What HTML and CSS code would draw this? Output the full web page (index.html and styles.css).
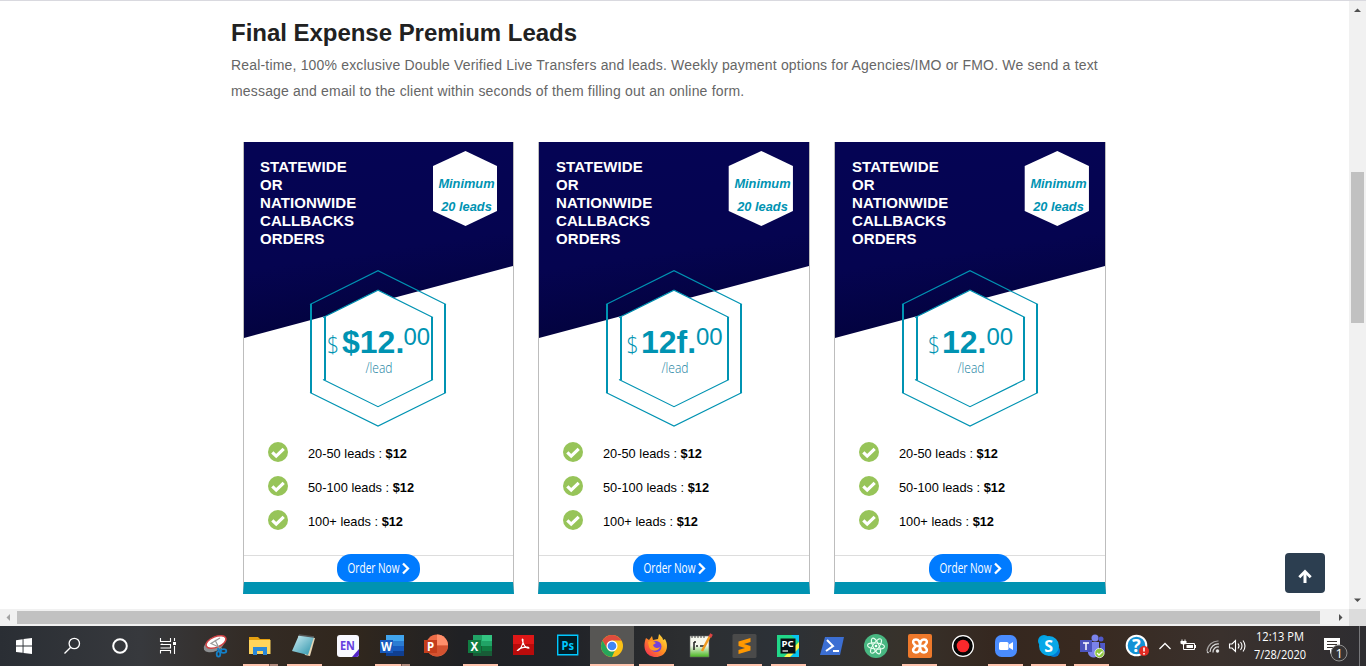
FILE: index.html
```html
<!DOCTYPE html>
<html lang="en">
<head>
<meta charset="utf-8">
<title>Final Expense Premium Leads</title>
<link rel="stylesheet" href="styles.css">
</head>
<body>
<svg class="defs" width="0" height="0">
  <defs>
    <linearGradient id="navy" x1="0.4" y1="0" x2="0.6" y2="1">
      <stop offset="0" stop-color="#050454"/><stop offset=".55" stop-color="#050450"/><stop offset="1" stop-color="#02023a"/>
    </linearGradient>
    <linearGradient id="fox" x1="1" y1="0" x2="0" y2="1"><stop offset="0" stop-color="#fff044"/><stop offset=".45" stop-color="#ff9420"/><stop offset="1" stop-color="#f5205a"/></linearGradient>
    <linearGradient id="note" x1="0" y1="0" x2="1" y2="1"><stop offset="0" stop-color="#d2f0f5"/><stop offset="1" stop-color="#2690a8"/></linearGradient>
    <linearGradient id="npp" x1="0" y1="0" x2="0" y2="1"><stop offset=".45" stop-color="#f6f8ee"/><stop offset="1" stop-color="#48b520"/></linearGradient>
    <symbol id="ok" viewBox="0 0 20 20"><circle cx="10" cy="10" r="10" fill="#97c459"/><path d="M4.300 10.400l3.900 3.700 7.500-7.300" fill="none" stroke="#fff" stroke-width="3.200"/></symbol>
    <symbol id="banner" viewBox="0 0 269 196" preserveAspectRatio="none"><path d="M0 0H269V124L0 196Z" fill="url(#navy)"/><path d="M189 24L221.500 9L253 24V69L221.500 84L189 69Z" fill="#fff"/></symbol>
    <symbol id="hexes" viewBox="0 0 138 158">
      <path d="M69 20L123.500 47.500V110.500L69 137.500L14.500 110.500V47.500Z" fill="#fff"/>
      <g fill="none" stroke="#0093b2"><path stroke-width="1.200" d="M1 34.500L69 .7L137 34.500M1 122.500L69 156L137 122.500M14 47.500L69 20.200L124 47.500M14 109.500L69 136.700L124 109.500"/><path stroke-width="2" d="M2 34V123M136 34V123M16 47V110M123 47V110"/></g>
    </symbol>
  </defs>
</svg>
<div class="window">
  <main class="page">
    <h1 class="title">Final Expense Premium Leads</h1>
    <p class="intro">Real-time, 100% exclusive Double Verified Live Transfers and leads. Weekly payment options for Agencies/IMO or FMO. We send a text<br>message and email to the client within seconds of them filling out an online form.</p>
    <div class="cards">
      <article class="card first">
        <header class="head">
          <svg class="banner"><use href="#banner"/></svg>
          <h2 class="name">STATEWIDE<br>OR<br>NATIONWIDE<br>CALLBACKS<br>ORDERS</h2>
          <p class="minimum">Minimum<br>20 leads</p>
        </header>
        <svg class="price" viewBox="0 0 138 158"><use href="#hexes"/>
          <text class="sign" x="18" y="83" textLength="12" lengthAdjust="spacingAndGlyphs">$</text><text class="amount" x="33" y="83">$12.</text><text class="cents" x="94.500" y="75">00</text>
          <text class="per" x="56.500" y="103" textLength="27" lengthAdjust="spacingAndGlyphs">/lead</text></svg>
        <ul class="tiers">
          <li><svg class="ok"><use href="#ok"/></svg><span>20-50 leads : <b>$12</b></span></li>
          <li><svg class="ok"><use href="#ok"/></svg><span>50-100 leads : <b>$12</b></span></li>
          <li><svg class="ok"><use href="#ok"/></svg><span>100+ leads : <b>$12</b></span></li>
        </ul>
        <footer class="foot"><a class="order"><svg width="83" height="28"><text x="10.500" y="19" textLength="52" lengthAdjust="spacingAndGlyphs">Order Now</text><path d="M66 9.500l5 5-5 5"/></svg></a></footer>
      </article>
      <article class="card">
        <header class="head">
          <svg class="banner"><use href="#banner"/></svg>
          <h2 class="name">STATEWIDE<br>OR<br>NATIONWIDE<br>CALLBACKS<br>ORDERS</h2>
          <p class="minimum">Minimum<br>20 leads</p>
        </header>
        <svg class="price" viewBox="0 0 138 158"><use href="#hexes"/>
          <text class="sign" x="21.500" y="83" textLength="12" lengthAdjust="spacingAndGlyphs">$</text><text class="amount" x="36" y="83">12f.</text><text class="cents" x="91" y="75">00</text>
          <text class="per" x="56.500" y="103" textLength="27" lengthAdjust="spacingAndGlyphs">/lead</text></svg>
        <ul class="tiers">
          <li><svg class="ok"><use href="#ok"/></svg><span>20-50 leads : <b>$12</b></span></li>
          <li><svg class="ok"><use href="#ok"/></svg><span>50-100 leads : <b>$12</b></span></li>
          <li><svg class="ok"><use href="#ok"/></svg><span>100+ leads : <b>$12</b></span></li>
        </ul>
        <footer class="foot"><a class="order"><svg width="83" height="28"><text x="10.500" y="19" textLength="52" lengthAdjust="spacingAndGlyphs">Order Now</text><path d="M66 9.500l5 5-5 5"/></svg></a></footer>
      </article>
      <article class="card">
        <header class="head">
          <svg class="banner"><use href="#banner"/></svg>
          <h2 class="name">STATEWIDE<br>OR<br>NATIONWIDE<br>CALLBACKS<br>ORDERS</h2>
          <p class="minimum">Minimum<br>20 leads</p>
        </header>
        <svg class="price" viewBox="0 0 138 158"><use href="#hexes"/>
          <text class="sign" x="27" y="83" textLength="12" lengthAdjust="spacingAndGlyphs">$</text><text class="amount" x="41" y="83">12.</text><text class="cents" x="85.500" y="75">00</text>
          <text class="per" x="56.500" y="103" textLength="27" lengthAdjust="spacingAndGlyphs">/lead</text></svg>
        <ul class="tiers">
          <li><svg class="ok"><use href="#ok"/></svg><span>20-50 leads : <b>$12</b></span></li>
          <li><svg class="ok"><use href="#ok"/></svg><span>50-100 leads : <b>$12</b></span></li>
          <li><svg class="ok"><use href="#ok"/></svg><span>100+ leads : <b>$12</b></span></li>
        </ul>
        <footer class="foot"><a class="order"><svg width="83" height="28"><text x="10.500" y="19" textLength="52" lengthAdjust="spacingAndGlyphs">Order Now</text><path d="M66 9.500l5 5-5 5"/></svg></a></footer>
      </article>
    </div>
    <a class="to-top"><svg width="40" height="40" fill="none" stroke="#fff"><path stroke-width="3" d="M20 31V20"/><path stroke-width="2.800" d="M14.300 25.200L20 19.500l5.700 5.700"/></svg></a>
  </main>
  <div class="vbar"><svg width="17" height="17"><path d="M5 11L8.500 7.500 12 11Z" fill="#505050"/></svg><i class="vthumb"></i><svg class="down" width="17" height="17"><path d="M5 6.500h7L8.500 10Z" fill="#505050"/></svg></div>
</div>
<div class="hbar"><svg width="17" height="17"><path d="M10 5v7L6.500 8.500Z" fill="#a3a3a3"/></svg><i class="hthumb"></i><svg class="right" width="17" height="17"><path d="M7 5v7l3.500-3.500Z" fill="#505050"/></svg><i class="corner"></i></div>
<div class="taskbar">
  <div class="cell sys"><svg viewBox="0 0 24 24"><path fill="#fff" d="M4 6.200l6.600-1v6.300H4ZM11.500 5L20 4v7.500h-8.500ZM4 12.400h6.600v6.400L4 17.900ZM11.500 12.400H20V20l-8.500-1.100Z"/></svg></div>
  <div class="cell sys"><svg viewBox="0 0 24 24" fill="none" stroke="#fff" stroke-width="1.300"><circle cx="14.300" cy="9.500" r="5.200"/><path d="M10.700 13.300L4.500 19.500"/></svg></div>
  <div class="cell sys"><svg viewBox="0 0 24 24" fill="none" stroke="#fff" stroke-width="2"><circle cx="12" cy="12" r="6.800"/></svg></div>
  <div class="cell sys"><svg viewBox="0 0 24 24" fill="none" stroke="#fff" stroke-width="1.100"><path d="M4.500 4v3.500h10V4M4.500 19.500v-3H14.500v3M6 10.500v-1M4.500 10.500h10v3.500h-10M18.500 4v3M18.500 12v8"/><path fill="#fff" stroke="none" d="M17 8h3v3h-3Z"/></svg></div>
  <div class="cell snip"><svg viewBox="0 0 24 24"><ellipse cx="11" cy="11" rx="11" ry="6.300" transform="rotate(-25 11 11)" fill="#8d9092"/><ellipse cx="13" cy="8" rx="10.500" ry="5.300" transform="rotate(-22 13 8)" fill="#fff" stroke="#cf4345" stroke-width="1.500"/><path d="M17 4L8 9.500l11 5M12 6l4 8" fill="none" stroke="#999" stroke-width="1.200"/><g fill="none" stroke="#1480c8" stroke-width="1.800"><ellipse cx="15.500" cy="20" rx="1.800" ry="2.700"/><ellipse cx="20.500" cy="17" rx="2.800" ry="1.800"/><path d="M16 17l-1-3M18 16l-4-1"/></g></svg></div>
  <div class="cell open multi"><svg viewBox="0 0 24 24"><path fill="#e5a010" d="M1 3h9l2 2h10v5H1Z"/><path fill="#ffd45c" d="M1 6h21.500v14H1Z"/><path fill="#2b88d8" d="M5 13h14v8h-4v-4H9v4H5Z"/></svg></div>
  <div class="cell open"><svg viewBox="0 0 24 24"><path d="M6 2l17 2-5 18-5-1Z" fill="#e7d7b5"/><path d="M7 1l15 2-6 18L0 17Z" fill="url(#note)"/><path d="M7 1l15 2" stroke="#555" stroke-width="1.500"/></svg></div>
  <div class="cell"><svg viewBox="0 0 24 24"><rect x="1" y="1" width="22" height="22" rx="3" fill="#f9f9ff"/><path d="M23 15v5q0 3-3 3h-4Z" fill="#5324c7"/><text class="app-text" x="4" y="16" fill="#6540df" font-size="11.500" textLength="15" lengthAdjust="spacingAndGlyphs">EN</text></svg></div>
  <div class="cell open multi"><svg viewBox="0 0 24 24"><path fill="#41a5ee" d="M6 1h18v6H6Z"/><path fill="#2b7cd3" d="M6 7h18v5H6Z"/><path fill="#185abd" d="M6 12h18v5H6Z"/><path fill="#103f91" d="M6 17h18v5H6Z"/><path fill="#185abd" d="M0 6h13v13H0Z"/><text class="app-text" x="1" y="16.500" fill="#fff" font-size="11.500" textLength="11" lengthAdjust="spacingAndGlyphs">W</text></svg></div>
  <div class="cell"><svg viewBox="0 0 24 24"><circle cx="13" cy="11.500" r="11" fill="#ed6c47"/><path d="M13 .5a11 11 0 0 1 11 11H13Z" fill="#ff8f6b"/><path d="M24 11.500a11 11 0 0 1-20 6l9-6Z" fill="#d35230"/><path fill="#c43e1c" d="M0 6h13v13H0Z"/><text class="app-text" x="3" y="16.500" fill="#fff" font-size="11.500">P</text></svg></div>
  <div class="cell open"><svg viewBox="0 0 24 24"><path fill="#21a366" d="M5 1h19v21H5Z"/><path fill="#33c481" d="M14 1h10v6H14Z"/><path fill="#107c41" d="M14 12h10v5H14Z"/><path fill="#185c37" d="M5 12h9v5h10v5H5Z"/><path fill="#107c41" d="M0 6h13v13H0Z"/><text class="app-text" x="2.500" y="16.500" fill="#fff" font-size="11.500">X</text></svg></div>
  <div class="cell"><svg viewBox="0 0 24 24"><path fill="#b90b0b" d="M1 1h21v20H1Z"/><path fill="#df1717" d="M1 1h21v9H1Z"/><path d="M5.500 16.500c2 0 6.500-6.500 5.500-11-.8-1-1.300 0 0 3 1.500 4 4 6 6 5.500 0-2-9.500-.5-11.500 2.500Z" fill="none" stroke="#fff" stroke-width="1.100"/></svg></div>
  <div class="cell"><svg viewBox="0 0 24 24"><path fill="#001d26" stroke="#00c8ff" stroke-width="1.400" d="M1.700 1.200h20v19.600h-20Z"/><text x="5.500" y="15.500" class="app-text" fill="#00c8ff" font-size="12" textLength="12.500" lengthAdjust="spacingAndGlyphs">Ps</text></svg></div>
  <div class="cell open active"><svg viewBox="0 0 24 24"><circle cx="12" cy="12" r="11" fill="#fbc116"/><path fill="#df4c3e" d="M2.500 6.500A11 11 0 0 1 21.500 6.500H12l-4.800 8.300Z"/><path fill="#26a65b" d="M2.500 6.500l4.700 8.300a5.500 5.500 0 0 0 7.500 2L12 23A11 11 0 0 1 2.500 6.500Z"/><circle cx="12" cy="12" r="5.500" fill="#fff"/><circle cx="12" cy="12" r="4.300" fill="#4285f4"/></svg></div>
  <div class="cell open"><svg viewBox="0 0 24 24"><path fill="url(#fox)" d="M2 4l3 2 3-4 1 4 5-1 1-5c3 3 4 4 4 6l2-1c5 9 0 18-9 18C2 23-2 14 2 4Z"/><circle cx="12" cy="12.500" r="5.500" fill="#7542d9"/><path fill="#ff9d25" d="M4 8c3-2 5-1 8 1l-3 2c1 3 4 4 7 2-2 5-9 5-11 0Z"/></svg></div>
  <div class="cell"><svg viewBox="0 0 24 24"><path fill="url(#npp)" stroke="#666" stroke-width=".6" d="M2 2h19v21H2Z"/><path d="M4 2v2m3-2v2m3-2v2m3-2v2m3-2v2" stroke="#444"/><path d="M6 8v8M8 12h2m2 0h4M6 8h2" stroke="#222" stroke-width="1.500" fill="none"/><path d="M22 2l-8 15" stroke="#f09a20" stroke-width="2.500"/><path d="M23.500 0L22 3" stroke="#d44" stroke-width="3"/></svg></div>
  <div class="cell open"><svg viewBox="0 0 24 24"><rect x=".5" width="24" height="24" rx="1.500" fill="#4a4a4a"/><path fill="#ff9800" d="M6.500 7.500L18.500 4v4l-6.500 2 6.500 2v4.500l-12 3.500v-4l6.500-2-6.500-2Z"/></svg></div>
  <div class="cell open"><svg viewBox="0 0 24 24"><path fill="#21d789" d="M1 1h22v22H1Z"/><path fill="#fcf84a" d="M23 8v15H8Z"/><path fill="#07c3f2" d="M15 1h8v7ZM14 23l9-9v9Z"/><path fill="#071013" d="M4.500 4.500h15v15h-15Z"/><text class="app-text" x="5.500" y="12.500" fill="#fff" font-size="9" textLength="12" lengthAdjust="spacingAndGlyphs">PC</text><path d="M6.500 17h5.500" stroke="#fff" stroke-width="1.200"/></svg></div>
  <div class="cell"><svg viewBox="0 0 24 24"><path fill="#3c6fd3" d="M5 3h19l-4 18H0Z"/><path d="M7 6l6 6-7 5M13 17h6" fill="none" stroke="#fff" stroke-width="2"/></svg></div>
  <div class="cell"><svg viewBox="0 0 24 24"><circle cx="12" cy="12" r="12" fill="#48b781"/><g fill="none" stroke="#e8fff0"><ellipse cx="12" cy="12" rx="3" ry="8.500" transform="rotate(-25 12 12)"/><ellipse cx="12" cy="12" rx="3" ry="8.500" transform="rotate(35 12 12)"/><ellipse cx="12" cy="12" rx="3" ry="8.500" transform="rotate(95 12 12)"/></g><circle cx="12" cy="12" r="1.300" fill="#fff"/></svg></div>
  <div class="cell open narrow"><svg viewBox="0 0 24 24"><rect width="24" height="24" rx="2" fill="#ee792b"/><path d="M6.500 10.500C4 8 5 5.500 8 5.500c4 0 4 4 4 6.500 0-2.500 0-6.500 4-6.500 3 0 4 2.500 1.500 5L16 12l1.500 1.500c2.500 2.500 1.500 5-1.500 5-4 0-4-4-4-6.500 0 2.500 0 6.500-4 6.500-3 0-4-2.500-1.500-5L8 12ZM8 12h8" fill="none" stroke="#fff" stroke-width="2.500"/></svg></div>
  <div class="cell narrow"><svg viewBox="0 0 24 24"><circle cx="12" cy="12" r="10.400" fill="#050505" stroke="#fff" stroke-width="1.300"/><circle cx="12" cy="12" r="6.300" fill="#f9292c"/></svg></div>
  <div class="cell open narrow"><svg viewBox="0 0 24 24"><rect x="1" y="1" width="22" height="22" rx="6.500" fill="#4a8cff"/><rect x="5" y="8" width="9.500" height="8" rx="1.500" fill="#fff"/><path d="M15 10.500l4-2.500v8l-4-2.500Z" fill="#fff"/></svg></div>
  <div class="cell open narrow"><svg viewBox="0 0 24 24"><circle cx="7" cy="7" r="6" fill="#00a4e6"/><circle cx="17" cy="17" r="6" fill="#0078d4"/><circle cx="12" cy="12" r="10" fill="#08a8e8"/><text class="app-text" x="7.200" y="17.500" fill="#fff" font-size="16">S</text></svg></div>
  <div class="cell open narrow"><svg viewBox="0 0 24 24"><circle cx="15" cy="4" r="3.500" fill="#7b83eb"/><circle cx="21" cy="5" r="2.500" fill="#5059c9"/><path d="M8 8h11v9a5 5 0 0 1-11 2Z" fill="#7b83eb"/><path d="M20 9h5v7q0 3-4 4Z" fill="#5059c9"/><path d="M0 6h12v12H0Z" fill="#4b53bc"/><path d="M3 9h6M6 9v7" stroke="#fff" stroke-width="1.500"/><circle cx="19.500" cy="19" r="4.700" fill="#8ec63f" stroke="#fff" stroke-width=".7"/><path d="M17 19l2 2 3.500-3.500" fill="none" stroke="#fff" stroke-width="1.300"/></svg></div>
  <div class="cell help"><svg viewBox="0 0 24 24"><circle cx="11.500" cy="11.500" r="9.800" fill="#1292d5" stroke="#fff" stroke-width="2"/><text class="app-text" x="7" y="18" fill="#fff" font-size="18">?</text><circle cx="19" cy="17" r="5" fill="#e22b22"/><path d="M19 13.500v4M19 19v1.500" stroke="#fff" stroke-width="1.600"/></svg></div>
  <div class="cell chev"><svg viewBox="0 0 24 24"><path d="M6.500 15L12 9.500l5.500 5.500" fill="none" stroke="#fff" stroke-width="1.300"/></svg></div>
  <div class="cell tray"><svg viewBox="0 0 24 24" fill="none" stroke="#fff"><path d="M10 9.500h8.500v6H8.500M19.500 11v3M6 5.500v2M9 5.500v2M7.500 10v5.500h2"/><path fill="#fff" stroke="none" d="M4.500 7h6v2.500q-3 2-6 0ZM10.500 11H17v3h-6.500Z"/></svg></div>
  <div class="cell tray"><svg viewBox="0 0 24 24" fill="none" stroke="#ddd" stroke-width="1.200"><path opacity=".65" d="M6 17A11 11 0 0 1 17.500 7"/><path d="M9 18a8 8 0 0 1 9-8M12 18.500a5 5 0 0 1 6-5.500"/><path d="M6 17.500l1.500 1.500"/><circle cx="16.500" cy="17" r="1.200" fill="#fff"/></svg></div>
  <div class="cell vol"><svg viewBox="0 0 24 24" fill="none" stroke="#fff" stroke-width="1.100"><path d="M4.500 10h2.500l3.500-3.500v11L7 14H4.500ZM13 9.500q2 2.500 0 5M15.500 8q3 4 0 8M18 6.500q4 5.500 0 11"/></svg></div>
  <div class="clock"><svg width="58" height="40"><text x="3" y="15" textLength="48" lengthAdjust="spacingAndGlyphs">12:13 PM</text><text x="1" y="33" textLength="52" lengthAdjust="spacingAndGlyphs">7/28/2020</text></svg></div>
  <div class="notice"><svg width="32" height="40"><path fill="#fff" d="M3 12h16v12h-6l-4 4v-4H3Z"/><path d="M6 15.500h10M6 18.500h10M6 21.500h6" stroke="#3a3431"/><circle cx="18" cy="27" r="8" fill="#363334" stroke="#909090"/><text x="14.500" y="31.500">1</text></svg></div>
</div>
</body>
</html>
```

FILE: styles.css
```css
* { box-sizing: border-box; }
body {
  margin: 0; width: 1366px; height: 666px; overflow: hidden;
  display: flex; flex-direction: column;
  background: #fff; font-family: "Liberation Sans", Arial, sans-serif;
}
svg { display: block; flex: none; }
.defs { position: absolute; }
.window { display: flex; height: 609px; border-top: 1px solid #d9d9df; }
.page { position: relative; width: 1349px; padding: 17px 0 0 231px; }
.title { margin: 0; font-size: 24px; line-height: 30px; letter-spacing: -.03px; color: #212121; }
.intro { margin: 4px 0 0; font-size: 14px; line-height: 26px; letter-spacing: .178px; color: #666; white-space: nowrap; }
.cards {
  display: grid; grid-template-columns: 271px 272px 272px; gap: 24px;
  margin: 38px 0 0 12px;
}
.card {
  height: 452px; display: flex; flex-direction: column; align-items: center;
  border: 1px solid #bdbdbd; border-top: 0; border-bottom: 12px solid #0093b2;
}
.head { position: relative; width: 100%; height: 128px; display: flex; justify-content: space-between; padding: 16px 14.500px 0 17px; }
.first .head { padding-left: 16px; }
.banner { position: absolute; left: 0; top: 0; width: 100%; height: 196px; }
.name { position: relative; margin: 0; font-size: 15px; line-height: 18px; letter-spacing: .08px; color: #fff; }
.minimum {
  position: relative; margin: 14px 0 0; width: 64px; text-align: center;
  font-size: 12.800px; line-height: 23px; font-weight: bold; font-style: italic; color: #0093b2;
}
.price { position: relative; width: 138px; height: 158px; }
.first .price { margin-left: -1px; }
.price text { fill: #0093b2; font-family: "Open Sans", sans-serif; font-weight: 300; }
.price .sign { font-size: 24px; }
.price .amount { font-family: "Liberation Sans", Arial, sans-serif; font-size: 32px; font-weight: bold; }
.price .cents { font-family: "Liberation Sans", Arial, sans-serif; font-size: 24px; }
.price .per { font-size: 14px; fill: #177f9f; }
.tiers { width: 100%; margin: 7px 0 0; padding: 0 0 0 24px; list-style: none; font-size: 12.800px; color: #000; }
.tiers li { height: 34px; display: flex; align-items: center; gap: 20px; }
.tiers span { padding-top: 3px; }
.ok { width: 20px; height: 20px; }
.foot { width: 100%; height: 27px; margin-top: auto; border-top: 1px solid #ddd; display: flex; justify-content: center; }
.order { width: 83px; height: 28px; margin-top: -2px; background: #007bff; border-radius: 14px 14px 12px 12px; }
.order text { font: 14px "Open Sans", sans-serif; fill: #fff; }
.order path { fill: none; stroke: #fff; stroke-width: 2.300px; }
.to-top { position: absolute; left: 1285px; top: 552px; width: 40px; height: 40px; border-radius: 4px; background: #2c3e50; }
.to-top svg { margin-top: -1px; }
.vbar { width: 17px; display: flex; flex-direction: column; align-items: center; background: #f1f1f1; }
.vthumb { width: 13px; height: 151px; margin-top: 154px; background: #c1c1c1; }
.down { margin-top: auto; }
.hbar { height: 17px; display: flex; align-items: center; background: #f1f1f1; }
.hthumb { width: 1303px; height: 13px; background: #c1c1c1; }
.right { margin-left: auto; }
.corner { width: 17px; height: 17px; background: #dcdcdc; }
.taskbar {
  height: 40px; display: flex;
  background: linear-gradient(90deg, #2a2e34 0, #37393d 140px, #332b25 250px, #31271d 350px, #202124 460px, #202227 560px, #2c2e30 680px, #2c3137 780px, #37322b 900px, #35271f 1000px, #38291f 1080px, #3a312d 1220px, #2e2d31 1366px);
}
.cell { width: 44px; height: 40px; display: flex; align-items: center; justify-content: center; }
.cell svg { width: 24px; height: 24px; overflow: visible; }
.sys { width: 48px; }
.snip { width: 46px; }
.narrow { width: 43px; }
.open { background: linear-gradient(#ffc4ad, #ffc4ad) center bottom / 35px 2px no-repeat; }
.multi { background: linear-gradient(90deg, #ffc4ad 26px, #7a584d 26px 27px, #b38c7e 27px) center bottom / 35px 2px no-repeat; }
.active { background: linear-gradient(#ffc4ad, #ffc4ad) center bottom / 100% 2px no-repeat #575654; }
.app-text { font-family: "Noto Sans", sans-serif; font-weight: bold; }
.help { width: 34px; margin-left: 7px; }
.chev { width: 22px; }
.tray { width: 24.500px; }
.vol { width: 23px; }
.clock { width: 64px; padding-left: 5px; }
.clock text { font: 12px "Open Sans", sans-serif; fill: #fff; }
.notice { margin-left: 9px; width: 39px; height: 40px; border-right: 1px solid #77777a; }
.notice text { font: 13px "Open Sans", sans-serif; fill: #fff; }
```
